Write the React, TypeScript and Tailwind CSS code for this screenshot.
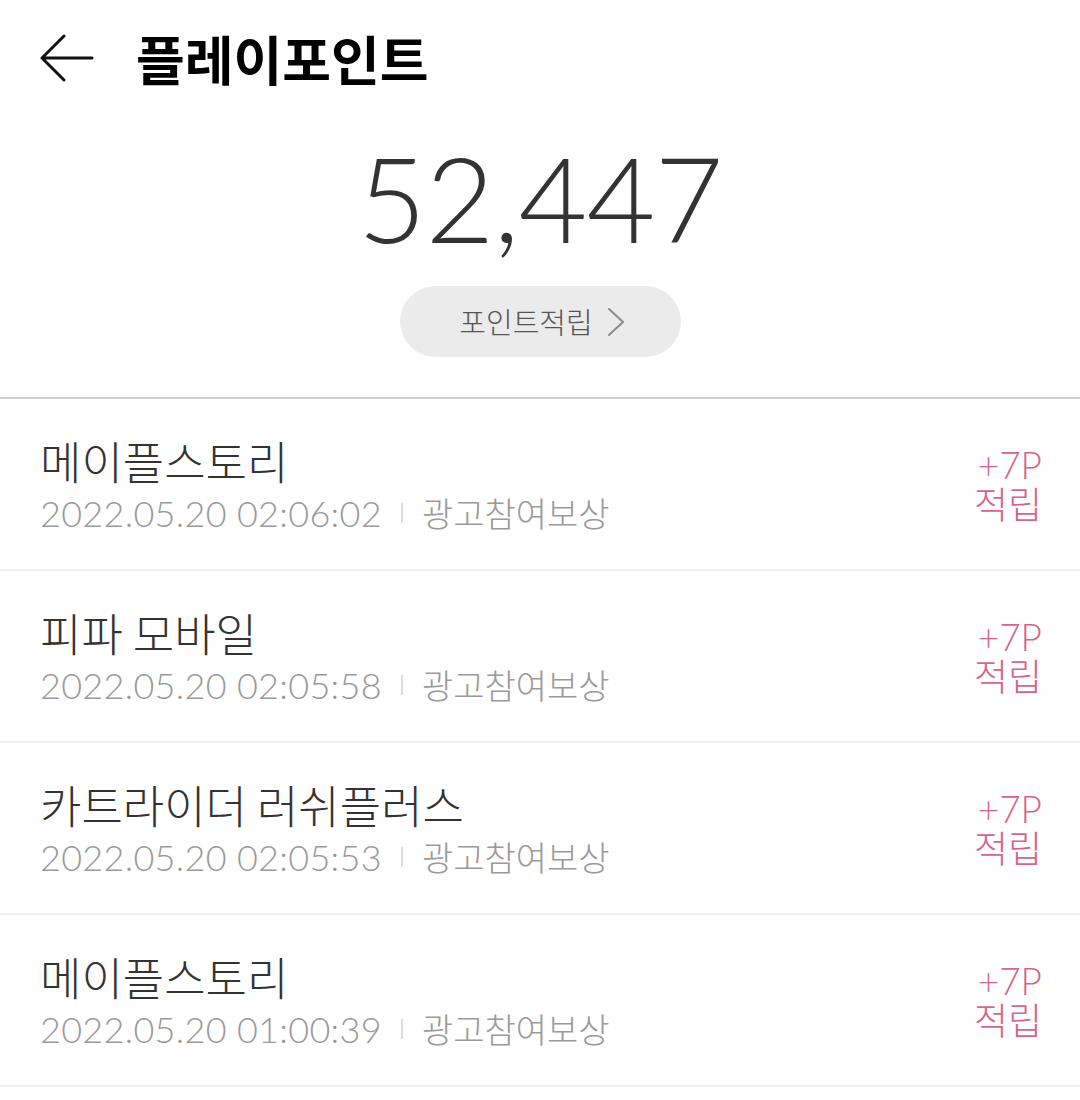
interface Entry {
  game: string
  date: string
  reason: string
  point: number
}

const entries: Entry[] = [
  { game: '메이플스토리', date: '2022.05.20 02:06:02', reason: '광고참여보상', point: 7 },
  { game: '피파 모바일', date: '2022.05.20 02:05:58', reason: '광고참여보상', point: 7 },
  { game: '카트라이더 러쉬플러스', date: '2022.05.20 02:05:53', reason: '광고참여보상', point: 7 },
  { game: '메이플스토리', date: '2022.05.20 01:00:39', reason: '광고참여보상', point: 7 },
]

const kr = "font-['Noto_Sans_CJK_KR',sans-serif]"
const num = "font-['Lato','Noto_Sans_CJK_KR',sans-serif]"

export default function App() {
  return (
    <div className={`w-[1080px] h-[1100px] bg-white ${kr}`}>
      <div className="h-[116px] flex items-center pl-[38px]">
        <svg width="56" height="48" viewBox="0 0 56 48" fill="none" stroke="#111" strokeWidth="3" strokeLinecap="round" strokeLinejoin="round">
          <path d="M54 24H4M26 2L4 24l22 22" />
        </svg>
        <h1 className="ml-[42px] text-[53px] font-bold text-black leading-none">플레이포인트</h1>
      </div>

      <div className="flex flex-col items-center">
        <p className={`${num} text-[119px] font-light text-[#333] leading-none mt-[22px] tracking-[-1px]`}>52,447</p>
        <button className="mt-[29px] w-[281px] h-[71px] rounded-full bg-[#ebebeb] flex items-center justify-center gap-[14px] text-[29px] font-light text-[#555] pl-[4px]">
          포인트적립
          <svg width="18" height="30" viewBox="0 0 18 30" fill="none" stroke="#8a8a8a" strokeWidth="2" strokeLinecap="round" strokeLinejoin="round">
            <path d="M2 2l14 13L2 28" />
          </svg>
        </button>
      </div>

      <div className="mt-[40px] border-t-2 border-[#cfcfcf]">
        {entries.map((e, i) => (
          <div key={i} className="h-[172px] border-b-2 border-[#f0f0f0] flex items-center justify-between pl-[40px] pr-[38px]">
            <div className="flex flex-col pt-[2px]">
              <span className="text-[45px] font-light text-[#333] leading-[52px]">{e.game}</span>
              <div className="flex items-center mt-[4px] text-[34px] font-light text-[#9a9a9a] leading-[44px]">
                <span className={`${num} font-light text-[36px] tracking-[0.3px]`}>{e.date}</span>
                <span className="mx-[19px] w-[2px] h-[20px] bg-[#dcdcdc]" />
                <span>{e.reason}</span>
              </div>
            </div>
            <div className="flex flex-col items-end text-[#d6648c] text-[37px] font-light leading-[39px]">
              <span className={`${num} font-light`}>+{e.point}P</span>
              <span>적립</span>
            </div>
          </div>
        ))}
      </div>
    </div>
  )
}
